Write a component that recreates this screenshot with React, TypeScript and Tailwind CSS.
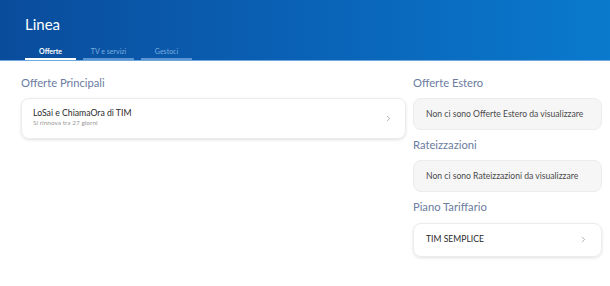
import { ChevronRight } from 'lucide-react';

const font = { fontFamily: 'Lato, "Noto Sans", sans-serif' };

function SectionTitle({ children }: { children: string }) {
  return <h2 className="text-[11.2px] leading-none text-[#6a7ca0] mb-[10px]">{children}</h2>;
}

function EmptyBox({ children }: { children: string }) {
  return (
    <div className="h-[32px] flex items-center px-[12px] rounded-[8px] bg-[#f6f6f6] border border-[#ececec] text-[8.6px] text-[#4a4a4a]">
      {children}
    </div>
  );
}

export default function App() {
  return (
    <div className="w-[610px] h-[286px] bg-white overflow-hidden" style={font}>
      <header className="h-[61px] bg-gradient-to-r from-[#0a4c9c] via-[#0a62b6] to-[#0a7acd] border-b border-[#6ea8de] flex flex-col">
        <h1 className="pl-[25px] pt-[17px] text-[15px] leading-none text-white">Linea</h1>
        <nav className="mt-auto flex gap-[7px] pl-[25px]">
          <div className="w-[51px] h-[14px] flex items-start justify-center text-[7px] font-bold text-white border-b-[2px] border-white">Offerte</div>
          <div className="w-[51px] h-[14px] flex items-start justify-center text-[7px] text-[#78addf] border-b-[2px] border-[#5b95d4]">TV e servizi</div>
          <div className="w-[51px] h-[14px] flex items-start justify-center text-[7px] text-[#78addf] border-b-[2px] border-[#5b95d4]">Gestoci</div>
        </nav>
      </header>

      <main className="flex gap-[7px] pl-[21px] pr-[8px] pt-[16px]">
        <section className="w-[385px]">
          <SectionTitle>Offerte Principali</SectionTitle>
          <div className="h-[41px] flex items-center justify-between pl-[11px] pr-[12px] rounded-[8px] border border-[#ececec] shadow-[0_1px_3px_rgba(0,0,0,0.12)]">
            <div className="-mt-[2px]">
              <div className="text-[8.7px] leading-none text-[#2a2a2a]">LoSai e ChiamaOra di TIM</div>
              <div className="text-[6.5px] leading-none text-[#9a9a9a] mt-[3px]">Si rinnova tra 27 giorni</div>
            </div>
            <ChevronRight size={9} strokeWidth={1.5} className="text-[#777]" />
          </div>
        </section>

        <section className="w-[189px] flex flex-col">
          <SectionTitle>Offerte Estero</SectionTitle>
          <EmptyBox>Non ci sono Offerte Estero da visualizzare</EmptyBox>
          <div className="mt-[9px]">
            <SectionTitle>Rateizzazioni</SectionTitle>
          </div>
          <EmptyBox>Non ci sono Rateizzazioni da visualizzare</EmptyBox>
          <div className="mt-[9px]">
            <SectionTitle>Piano Tariffario</SectionTitle>
          </div>
          <div className="h-[34px] flex items-center justify-between pl-[12px] pr-[13px] rounded-[8px] border border-[#ececec] shadow-[0_1px_3px_rgba(0,0,0,0.12)]">
            <span className="text-[8.6px] text-[#2a2a2a]">TIM SEMPLICE</span>
            <ChevronRight size={9} strokeWidth={1.5} className="text-[#777]" />
          </div>
        </section>
      </main>
    </div>
  );
}
